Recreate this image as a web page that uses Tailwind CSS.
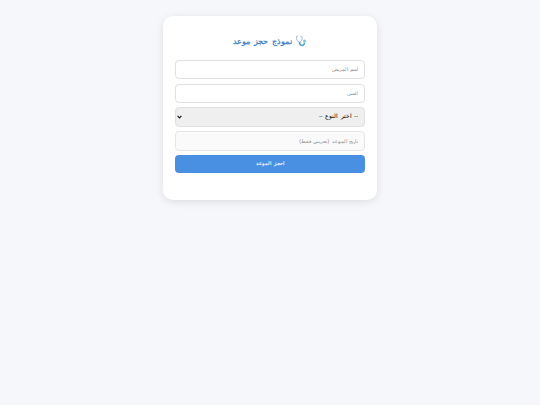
<!DOCTYPE html>
<html lang="ar" dir="rtl">
<head>
    <meta charset="UTF-8">
    <title>نموذج حجز موعد</title>
    <script src="https://cdn.jsdelivr.net/npm/@tailwindcss/browser@4"></script>
</head>
<body class="bg-[#f5f7fb] h-[405px] overflow-hidden pt-[16px] antialiased font-['Liberation_Sans',sans-serif]">
    <div class="w-[214px] h-[184px] mx-auto bg-white rounded-[10px] shadow-[0_2px_8px_rgba(0,0,0,0.1)] px-[12px] pt-[19px]">
        <h2 class="flex justify-center items-center gap-[3px] h-[12px] text-[8.3px] font-bold text-[#4a86c5] leading-none [word-spacing:1.5px]">
            <svg width="12" height="12" viewBox="0 0 12 12" fill="none">
                <path d="M3 1 L1.5 1.5 C1 4 2 6.5 4.5 7 C7 6.5 7.5 4 7 1.5 L5.5 1" stroke="#a9bccb" stroke-width="1"/>
                <path d="M4.5 7 C4.5 11.5 9.5 11.5 9.5 7.5" stroke="#45a5cc" stroke-width="1.5"/>
                <circle cx="9.5" cy="6" r="1.5" fill="#7cc4de"/>
            </svg>
            <span>نموذج حجز موعد</span>
        </h2>
        <form class="mt-[13px] flex flex-col">
            <input type="text" placeholder="اسم المريض" class="h-[19px] w-full bg-white border border-[#e0e0e0] rounded-[4px] px-[6px] pb-[1px] text-[5.2px] [word-spacing:1px] placeholder:text-[#888888]">
            <input type="text" placeholder="السن" class="mt-[5px] h-[19px] w-full bg-white border border-[#e0e0e0] rounded-[4px] px-[6px] pb-[1px] text-[5.2px] [word-spacing:1px] placeholder:text-[#888888]">
            <div class="relative mt-[4px]">
                <select class="block appearance-none h-[20px] w-full bg-[#efefef] border border-[#e0e0e0] rounded-[4px] px-[6px] pb-[1px] text-[5.6px] [word-spacing:1px] text-black">
                    <option>-- اختر النوع --</option>
                </select>
                <svg class="absolute left-[2px] top-[8px]" width="5" height="4" viewBox="0 0 5 4" fill="none">
                    <path d="M0.6 0.8 L2.5 2.9 L4.4 0.8" stroke="#111111" stroke-width="1.1"/>
                </svg>
            </div>
            <input type="text" placeholder="تاريخ الموعد (تجريبي فقط)" class="mt-[4px] h-[20px] w-full bg-[#fafafa] border border-[#e6e6e6] rounded-[4px] px-[6px] pb-[1px] text-[5.2px] [word-spacing:1px] placeholder:text-[#888888]">
            <button type="button" class="mt-[4px] h-[18px] w-full bg-[#4a90e2] text-white/90 rounded-[4px] text-[5.3px] font-bold [word-spacing:1px]">احجز الموعد</button>
        </form>
    </div>
</body>
</html>
